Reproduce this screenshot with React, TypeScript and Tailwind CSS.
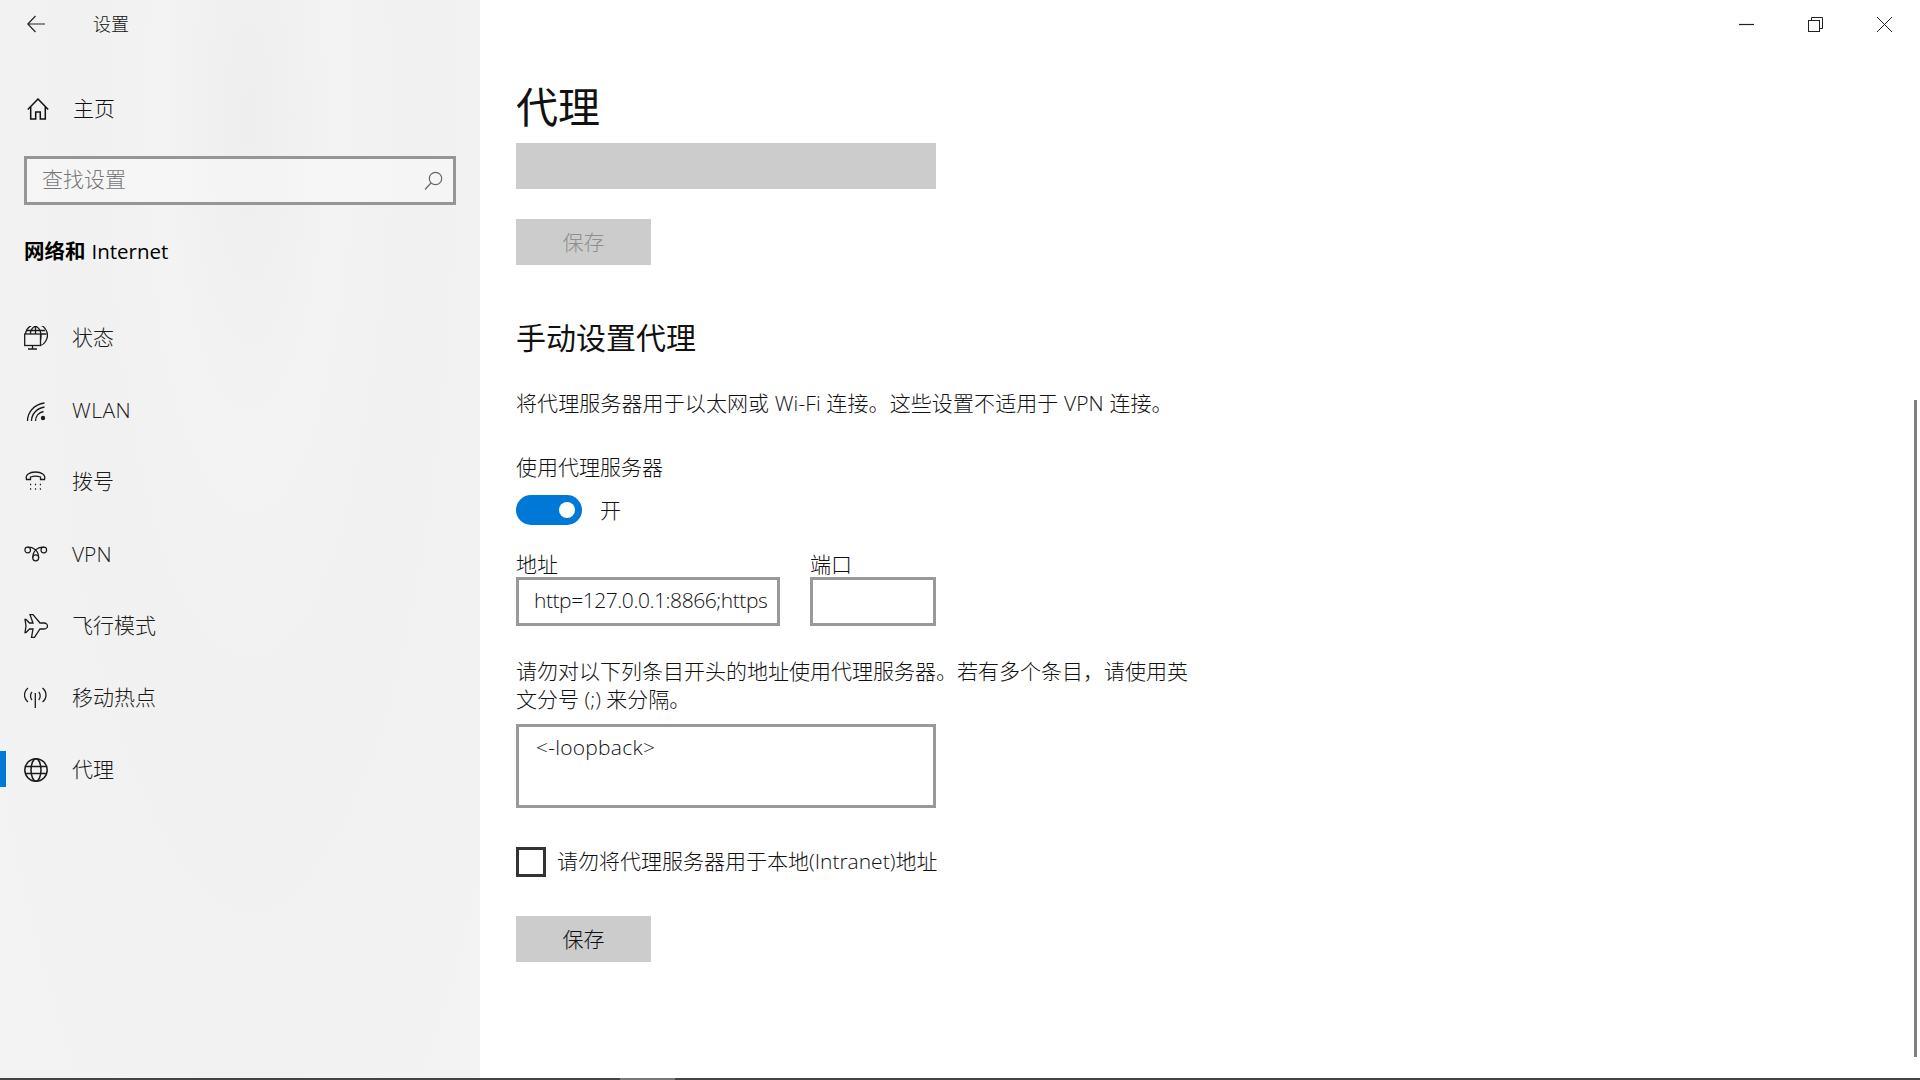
const S = { fill: "none", stroke: "#1a1a1a", strokeWidth: 1.4 } as const;

const icons: Record<string, React.ReactNode> = {
  status: (
    <svg width="24" height="24" viewBox="0 0 24 24" {...S} strokeWidth="1.300">
      <path d="M1.500 8a11 11 0 1 1 20 7.500c-1 1.800-2.500 3.200-5 4" />
      <path d="M2 4.500h19M11.500 0v8M6.500 8c0-3 2-6.500 5-8 3 1.500 5.500 5 5.500 9.500 0 1.500-.2 3-.5 4.500M17 8h5.500" />
      <rect x=".7" y="8" width="15.800" height="11.500" fill="#f3f3f3" />
      <path d="M8.500 19.500V23M4 23h9" />
    </svg>
  ),
  wlan: (
    <svg width="24" height="24" viewBox="0 0 24 24" {...S} strokeWidth="1.300">
      <path d="M3.500 23C3.500 14 10 6.500 20.500 5M7.500 23C7.500 16 12.500 10.500 20.500 9M11.500 23c0-5 3.500-8.500 8-9.500" />
      <circle cx="19" cy="20" r="2.200" fill="#1a1a1a" stroke="none" />
    </svg>
  ),
  dial: (
    <svg width="24" height="24" viewBox="0 0 24 24" {...S} strokeWidth="1.300">
      <path d="M2.500 9.500C1 5 5.500 2 11.500 2s10.500 3 9 7.500H16.500V7c-3-1-7-1-10 0v2.500z" />
      <path d="M6 14.500h1.200M10.900 14.500h1.200M15.800 14.500H17M6 19h1.200M10.900 19h1.200M15.800 19H17" />
    </svg>
  ),
  vpn: (
    <svg width="24" height="24" viewBox="0 0 24 24" {...S} strokeWidth="1.200">
      <circle cx="3.700" cy="8" r="2.800" />
      <circle cx="19.800" cy="8" r="2.800" />
      <circle cx="11.700" cy="15.800" r="3" />
      <path d="M3.700 5.200C9 5 14.500 8 14.700 15.800M19.800 5.200C14 5 9 8 8.700 15.800" />
    </svg>
  ),
  plane: (
    <svg width="24" height="24" viewBox="0 0 24 24" {...S} strokeWidth="1.300">
      <path d="M6 .7h3L16 9h4c2.500 0 3.500 2 3.500 3S22.500 15 20 15h-4l-5.500 8.300h-3L9 15H5.500L2 18.500H1L2 12 1 5.500h1L5.500 9H9z" />
    </svg>
  ),
  hotspot: (
    <svg width="24" height="24" viewBox="0 0 24 24" {...S} strokeWidth="1.300">
      <path d="M11.300 7v15" />
      <path d="M4 2C1.500 4 .5 6.500.5 9s1 5 3.500 7M18.500 2c2.500 2 3.500 4.500 3.500 7s-1 5-3.500 7" />
      <path d="M8 6C7 7 6.500 8.500 6.500 10s.5 2.800 1.500 4M14.700 6c1 1 1.500 2.500 1.500 4s-.5 2.800-1.500 4" />
    </svg>
  ),
  globe: (
    <svg width="24" height="24" viewBox="0 0 24 24" {...S} strokeWidth="1.500">
      <circle cx="12" cy="12" r="11.200" />
      <ellipse cx="12" cy="12" rx="5" ry="11.200" />
      <path d="M1.500 8.500h21M1.500 15.500h21" />
    </svg>
  ),
};

const nav: [string, string, boolean?][] = [
  ["status", "状态"],
  ["wlan", "WLAN"],
  ["dial", "拨号"],
  ["vpn", "VPN"],
  ["plane", "飞行模式"],
  ["hotspot", "移动热点"],
  ["globe", "代理", true],
];

function Sidebar() {
  return (
    <aside className="w-[480px] shrink-0 bg-[#f2f2f2] bg-[radial-gradient(ellipse_at_52%_11%,#eeeeee_0%,#f3f3f3_24%,#f1f1f1_45%,#f3f3f3_100%)] text-[#111] flex flex-col">
      <div className="h-12 flex items-center pl-[27px]">
        <svg width="18" height="18" viewBox="0 0 18 18" fill="none" stroke="#222" strokeWidth="1.200">
          <path d="M18 9H.8M8.500 1 .8 9l7.700 8" />
        </svg>
        <span className="ml-[48px] text-[18px]">设置</span>
      </div>
      <div className="mt-[37px] h-12 flex items-center pl-[27px]">
        <svg width="22" height="22" viewBox="0 0 22 22" fill="none" stroke="#111" strokeWidth="1.500">
          <path d="M.8 11.500 11 1l10.200 10.500M3.700 8.500V21h5v-7h4.600v7h5V8.500" />
        </svg>
        <span className="ml-6 text-[21px]">主页</span>
      </div>
      <div className="mt-[23px] mx-6 h-[49px] border-[3px] border-[#969696] flex items-center justify-between pl-[15px] pr-[10px] bg-white/30">
        <span className="text-[21px] text-[#777] pb-[2px]">查找设置</span>
        <svg width="19" height="19" viewBox="0 0 19 19" fill="none" stroke="#666" strokeWidth="1.200">
          <circle cx="11.500" cy="7.500" r="6.200" />
          <path d="M7 12 1 18.500" />
        </svg>
      </div>
      <div className="mt-8 h-[30px] pl-6 pb-[2px] flex items-center text-[20.500px] text-black leading-none">
        <span className="font-bold">网络和</span>
        <span className="ml-[6px] font-medium">Internet</span>
      </div>
      <nav className="mt-[35px] flex flex-col">
        {nav.map(([icon, label, active]) => (
          <div key={label} className="relative h-[72px] flex items-center pl-6">
            {active && <span className="absolute left-0 top-[17px] w-[6px] h-9 bg-[#0078d7]" />}
            {icons[icon]}
            <span className={label === "WLAN" ? "ml-6 text-[21px] text-[#1a1a1a] tracking-[0.5px] pt-[2px]" : label === "VPN" ? "ml-6 text-[21px] text-[#1a1a1a] pt-px" : "ml-6 text-[21px] text-[#1a1a1a]"}>
              {label}
            </span>
          </div>
        ))}
      </nav>
    </aside>
  );
}

function WindowControls() {
  return (
    <div className="h-12 flex justify-end items-start pt-[17px] pr-[28px] gap-[54px]">
      <svg width="15" height="15" viewBox="0 0 15 15" stroke="#222" strokeWidth="1.200" fill="none">
        <path d="M0 7.500h15" />
      </svg>
      <svg width="15" height="15" viewBox="0 0 15 15" stroke="#222" strokeWidth="1" fill="none">
        <rect x=".5" y="3.500" width="11" height="11" />
        <path d="M3.500 3.500v-3h11v11h-3" />
      </svg>
      <svg width="15" height="15" viewBox="0 0 15 15" stroke="#222" strokeWidth="1" fill="none">
        <path d="M0 0l15 15M15 0 0 15" />
      </svg>
    </div>
  );
}

function Main() {
  return (
    <main className="relative flex-1 bg-white text-[#111]">
      <span className="absolute right-[3px] top-[400px] w-[3px] h-[657px] bg-[#808080]" />
      <WindowControls />
      <div className="pl-9 flex flex-col items-start">
        <h1 className="mt-[29px] h-[60px] pb-[2px] flex items-center text-[42px] font-normal">代理</h1>
        <div className="mt-[6px] w-[420px] h-[46px] bg-[#cccccc]" />
        <button className="mt-[30px] w-[135px] h-[46px] pt-[2px] bg-[#cccccc] text-[#8f8f8f] text-[21px]">保存</button>
        <h2 className="mt-[52px] h-10 flex items-center text-[30px] font-normal">手动设置代理</h2>
        <p className="mt-8 h-7 pt-px flex items-center text-[21px] whitespace-nowrap tracking-[0.1px]">
          将代理服务器用于以太网或 Wi-Fi 连接。这些设置不适用于 VPN 连接。
        </p>
        <p className="mt-9 h-7 pt-px flex items-center text-[21px]">使用代理服务器</p>
        <div className="mt-[14px] h-[30px] flex items-center">
          <span className="w-[66px] h-[30px] rounded-full bg-[#0078d7] flex items-center justify-end pr-[7px]">
            <span className="w-[16px] h-[16px] rounded-full bg-white" />
          </span>
          <span className="ml-[18px] text-[21px] pt-[2px]">开</span>
        </div>
        <div className="mt-[25px] flex gap-[30px]">
          <label className="flex flex-col w-[264px]">
            <span className="h-[27px] pt-[3px] flex items-center text-[21px]">地址</span>
            <input
              readOnly
              value="http=127.0.0.1:8866;https=127.0.0.1:8866"
              className="h-[49px] w-full border-[3px] border-[#999] pl-[15px] pr-[9px] pb-[3px] text-[21px] tracking-[-0.45px] text-[#111] outline-none bg-white"
            />
          </label>
          <label className="flex flex-col w-[126px]">
            <span className="h-[27px] pt-[3px] flex items-center text-[21px]">端口</span>
            <input readOnly value="" className="h-[49px] w-full border-[3px] border-[#999] outline-none bg-white" />
          </label>
        </div>
        <p className="mt-[31px] w-[690px] text-[21px] leading-[28px]">
          请勿对以下列条目开头的地址使用代理服务器。若有多个条目，请使用英文分号 (;) 来分隔。
        </p>
        <textarea
          readOnly
          value="<-loopback>"
          className="mt-[11px] block w-[420px] h-[84px] border-[3px] border-[#999] pl-[17px] pt-[6px] text-[21px] tracking-[0.25px] leading-[28px] text-[#111] outline-none resize-none bg-white"
        />
        <div className="mt-[39px] h-[30px] flex items-center">
          <span className="w-[30px] h-[30px] border-[3px] border-[#333] bg-white" />
          <span className="ml-[11px] text-[21px] whitespace-nowrap">请勿将代理服务器用于本地(Intranet)地址</span>
        </div>
        <button className="mt-[39px] w-[135px] h-[46px] pt-[2px] bg-[#cccccc] text-[#111] text-[21px]">保存</button>
      </div>
    </main>
  );
}

export default function App() {
  return (
    <div className="h-[1080px] w-[1920px] overflow-hidden flex flex-col font-['Open_Sans','Noto_Sans_CJK_SC',sans-serif] font-light">
      <div className="h-[1078px] flex">
        <Sidebar />
        <Main />
      </div>
      <div className="h-[2px] flex bg-[#444]">
        <span className="ml-[620px] w-[55px] bg-[#777]" />
      </div>
    </div>
  );
}
